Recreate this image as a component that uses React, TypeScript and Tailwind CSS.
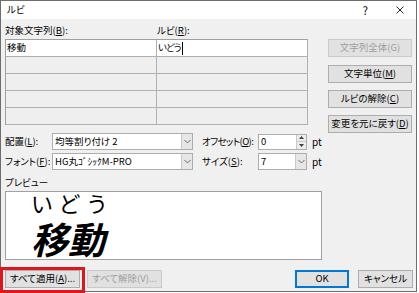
import React, { ReactNode } from "react";
import clsx from "clsx";

const U = ({ c }: { c: string }) => <span className="underline underline-offset-[1px]">{c}</span>;

interface BtnProps {
    children: ReactNode;
    disabled?: boolean;
    primary?: boolean;
    className?: string;
}

const Btn = ({ children, disabled, primary, className }: BtnProps) => (
    <div
        className={clsx(
            "flex h-[18px] items-center justify-center whitespace-nowrap bg-[#e1e1e1] leading-none",
            primary ? "border-2 border-[#0078d7]" : "border",
            !primary && (disabled ? "border-[#cacaca]" : "border-[#adadad]"),
            disabled ? "text-[#9d9d9d]" : "text-black",
            className
        )}
    >
        {children}
    </div>
);

const Chevron = () => (
    <svg width="7" height="5" viewBox="0 0 7 5">
        <path d="M0.5 1 L3.5 4 L6.5 1" fill="none" stroke="#6a6a6a" strokeWidth="1" />
    </svg>
);

const Select = ({ value, className }: { value: string; className?: string }) => (
    <div className={clsx("flex h-[17px] shrink-0 border border-[#adadad] bg-white", className)}>
        <div className="flex flex-1 items-center whitespace-nowrap pl-[2px] leading-none">{value}</div>
        <div className="flex w-[11px] items-center justify-center border-l border-[#c9c9c9] bg-[#e6e6e6]">
            <Chevron />
        </div>
    </div>
);

const Spinner = ({ value }: { value: string }) => (
    <div className="flex h-[16px] w-[49px] shrink-0 border border-[#adadad] bg-white">
        <div className="flex flex-1 items-center pl-[2px] leading-none">{value}</div>
        <div className="flex w-[10px] flex-col border-l border-[#c9c9c9] bg-[#ececec]">
            <div className="flex flex-1 items-center justify-center border-b border-[#c9c9c9]">
                <svg width="5" height="3" viewBox="0 0 5 3">
                    <path d="M0 3 L2.5 0 L5 3 Z" fill="#404040" />
                </svg>
            </div>
            <div className="flex flex-1 items-center justify-center">
                <svg width="5" height="3" viewBox="0 0 5 3">
                    <path d="M0 0 L2.5 3 L5 0 Z" fill="#404040" />
                </svg>
            </div>
        </div>
    </div>
);

const rows = [
    { base: "移動", ruby: "いどう" },
    { base: "", ruby: "" },
    { base: "", ruby: "" },
    { base: "", ruby: "" },
    { base: "", ruby: "" },
];

export default function App() {
    return (
        <div className="relative h-[293px] w-[419px] overflow-hidden bg-white font-['Noto_Sans_CJK_JP',sans-serif] text-[9.5px] text-black [font-feature-settings:'palt']">
            <div className="flex h-[292px] w-[417px] flex-col border border-[#6d6d6d] bg-[#f0f0f0]">
                {/* title bar */}
                <div className="flex h-[18px] items-center bg-white pl-[6px]">
                    <span className="leading-none">ルビ</span>
                    <span className="ml-auto text-[11px] leading-none">?</span>
                    <svg className="ml-[28px] mr-[12px]" width="8" height="8" viewBox="0 0 8 8">
                        <path d="M0.5 0.5 L7.5 7.5 M7.5 0.5 L0.5 7.5" stroke="#222" strokeWidth="1" />
                    </svg>
                </div>

                <div className="flex pl-[4px]">
                    {/* left column */}
                    <div className="flex w-[317px] flex-col">
                        <div className="mt-[6px] flex h-[12px] items-center whitespace-nowrap leading-none">
                            <span className="w-[152px]">
                                対象文字列(<U c="B" />):
                            </span>
                            <span>
                                ルビ(<U c="R" />):
                            </span>
                        </div>
                        <div className="mt-[2px] w-[303px] border-l border-t border-[#a0a0a0]">
                            {rows.map((r, i) => (
                                <div key={i} className={clsx("flex h-[17px]", i === 0 ? "bg-white" : "bg-[#efefef]")}>
                                    <div className="flex w-[151px] items-center border-b border-r border-[#b0b0b0] pl-[1px] leading-none">
                                        {r.base}
                                    </div>
                                    <div className="flex w-[151px] items-center border-b border-r border-[#b0b0b0] pl-[1px] leading-none">
                                        <span className="tracking-[-1px]">{r.ruby}</span>
                                        {i === 0 && <span className="ml-[1px] h-[13px] w-px bg-black" />}
                                    </div>
                                </div>
                            ))}
                        </div>

                        <div className="mt-[8px] flex items-center whitespace-nowrap">
                            <span className="w-[47px] shrink-0 leading-none">
                                配置(<U c="L" />):
                            </span>
                            <Select value="均等割り付け 2" className="w-[141px]" />
                            <span className="ml-[9px] w-[56px] shrink-0 tracking-[-0.6px] leading-none">
                                オフセット(<U c="O" />):
                            </span>
                            <Spinner value="0" />
                            <span className="ml-[5px] text-[10px] leading-none">pt</span>
                        </div>
                        <div className="mt-[3px] flex items-center whitespace-nowrap">
                            <span className="w-[47px] shrink-0 leading-none">
                                フォント(<U c="F" />):
                            </span>
                            <Select value="HG丸ｺﾞｼｯｸM-PRO" className="w-[141px]" />
                            <span className="ml-[9px] w-[56px] shrink-0 leading-none">
                                サイズ(<U c="S" />):
                            </span>
                            <Select value="7" className="w-[49px]" />
                            <span className="ml-[5px] text-[10px] leading-none">pt</span>
                        </div>

                        <div className="mt-[6px] h-[12px] leading-[12px]">プレビュー</div>
                        <div className="mt-[3px] flex h-[69px] flex-col overflow-hidden border border-[#a0a0a0] bg-white pl-[25px]">
                            <div className="-mt-[1px] whitespace-nowrap text-[22px] leading-[22px] tracking-[5.5px] [font-feature-settings:normal]">いどう</div>
                            <div className="mt-[7px] whitespace-nowrap text-[37px] font-bold italic leading-[36px] [font-feature-settings:normal]">移動</div>
                        </div>
                    </div>

                    {/* right column */}
                    <div className="ml-[6px] mt-[20px] flex w-[84px] flex-col">
                        <Btn disabled>文字列全体(G)</Btn>
                        <Btn className="mt-[8px]">
                            文字単位(<U c="M" />)
                        </Btn>
                        <Btn className="mt-[7px]">
                            ルビの解除(<U c="C" />)
                        </Btn>
                        <Btn className="mt-[7px]">
                            変更を元に戻す(<U c="D" />)
                        </Btn>
                    </div>
                </div>

                {/* bottom row */}
                <div className="mt-[10px] flex pl-[4px] pr-[3px]">
                    <Btn className="w-[75px]">
                        すべて適用(<U c="A" />)...
                    </Btn>
                    <Btn disabled className="ml-[7px] w-[75px]">
                        すべて解除(V)...
                    </Btn>
                    <Btn primary className="ml-auto w-[54px]">
                        OK
                    </Btn>
                    <Btn className="ml-[9px] w-[55px]">
                        キャンセル
                    </Btn>
                </div>
            </div>

            {/* red annotation frame */}
            <div className="absolute left-0 top-[267px] h-[26px] w-[85px] border-[3px] border-[#e2141c]" />
        </div>
    );
}
